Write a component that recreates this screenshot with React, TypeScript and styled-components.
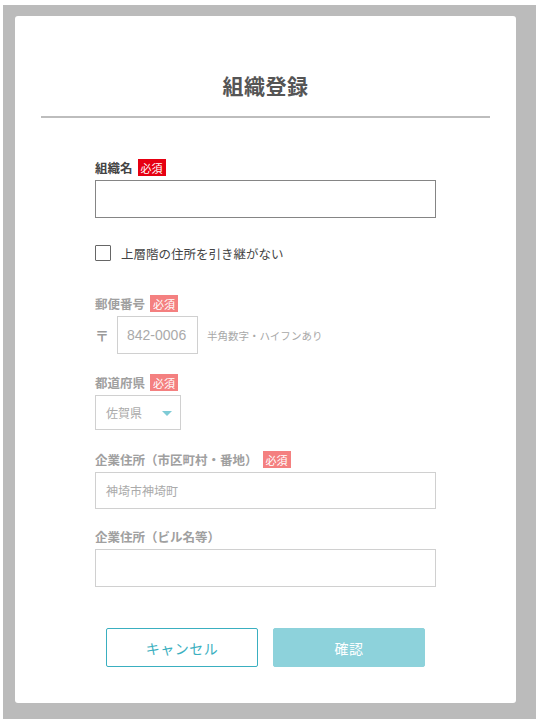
import React from "react";
import styled, { createGlobalStyle } from "styled-components";

const Global = createGlobalStyle`
  html, body { margin: 0; padding: 0; background: #ffffff; }
  body { font-family: "Noto Sans CJK JP", "Noto Sans", sans-serif; }
  * { box-sizing: border-box; }
`;

const Overlay = styled.div`
  margin: 5px 0 0 3px;
  width: 533px;
  height: 714px;
  background: #bbbbbb;
  padding: 11px 20px 16px 12px;
`;

const Card = styled.div`
  width: 501px;
  height: 687px;
  background: #ffffff;
  border-radius: 3px;
  padding: 0 26px;
  display: flex;
  flex-direction: column;
`;

const Title = styled.h1`
  margin: 54px 0 0;
  height: 30px;
  line-height: 30px;
  font-size: 21px;
  font-weight: 700;
  color: #555555;
  text-align: center;
  letter-spacing: 0.5px;
`;

const Divider = styled.hr`
  margin: 16px 0 0;
  border: none;
  height: 2px;
  background: #bdbdbd;
`;

const Form = styled.div`
  width: 341px;
  margin: 0 auto;
  display: flex;
  flex-direction: column;
`;

const Field = styled.div<{ $top: number }>`
  margin-top: ${(p) => p.$top}px;
  display: flex;
  flex-direction: column;
  gap: 4px;
`;

const LabelRow = styled.div`
  display: flex;
  align-items: center;
  gap: 5px;
  height: 17px;
`;

const Label = styled.span<{ $muted?: boolean }>`
  font-size: 12.5px;
  font-weight: 700;
  color: ${(p) => (p.$muted ? "#a0a0a0" : "#444444")};
  line-height: 17px;
`;

const Badge = styled.span<{ $muted?: boolean }>`
  display: inline-flex;
  align-items: center;
  justify-content: center;
  height: 17px;
  padding: 0 3px;
  font-size: 11px;
  color: #ffffff;
  background: ${(p) => (p.$muted ? "#f48080" : "#e60012")};
`;

const TextBox = styled.div<{ $height: number; $strong?: boolean }>`
  width: 100%;
  height: ${(p) => p.$height}px;
  border: ${(p) => (p.$strong ? "1.5px solid #858585" : "1.5px solid #d0d0d0")};
  display: flex;
  align-items: center;
  padding: 0 10px;
  font-size: 12px;
  color: #aaaaaa;
`;

const CheckRow = styled.label`
  margin-top: 27px;
  display: flex;
  align-items: center;
  gap: 10px;
  height: 16px;
`;

const CheckBox = styled.span`
  width: 16px;
  height: 16px;
  border: 1.5px solid #666666;
  border-radius: 1px;
  background: #fff;
`;

const CheckText = styled.span`
  font-size: 12.5px;
  color: #444444;
`;

const PostalRow = styled.div`
  display: flex;
  align-items: center;
  height: 38px;
`;

const PostMark = styled.span`
  width: 22px;
  font-size: 14px;
  font-weight: 700;
  color: #9a9a9a;
`;

const PostalInput = styled.div`
  width: 81px;
  height: 38px;
  border: 1.5px solid #d0d0d0;
  display: flex;
  align-items: center;
  padding-left: 9px;
  font-size: 14px;
  color: #aaaaaa;
  font-family: "Liberation Sans", "Noto Sans CJK JP", sans-serif;
`;

const Hint = styled.span`
  margin-left: 9px;
  font-size: 10.5px;
  color: #a8a8a8;
`;

const Select = styled.div`
  width: 86px;
  height: 35px;
  border: 1.5px solid #d0d0d0;
  display: flex;
  align-items: center;
  justify-content: space-between;
  padding: 0 8px 0 10px;
  font-size: 12px;
  color: #aaaaaa;
`;

const Caret = styled.span`
  width: 0;
  height: 0;
  border-left: 5px solid transparent;
  border-right: 5px solid transparent;
  border-top: 5px solid #7fcbd6;
  margin-top: 2px;
`;

const Buttons = styled.div`
  margin-top: 41px;
  display: flex;
  justify-content: center;
  gap: 15px;
`;

const Button = styled.button<{ $primary?: boolean }>`
  width: 152px;
  height: 39px;
  border-radius: 2px;
  font-family: "Noto Sans CJK JP", sans-serif;
  font-size: 14px;
  cursor: pointer;
  border: 1.5px solid ${(p) => (p.$primary ? "#8dd2db" : "#3aafc0")};
  background: ${(p) => (p.$primary ? "#8dd2db" : "#ffffff")};
  color: ${(p) => (p.$primary ? "#ffffff" : "#3aafc0")};
  letter-spacing: 0.5px;
`;

export default function App() {
  return (
    <>
      <Global />
      <Overlay>
        <Card>
          <Title>組織登録</Title>
          <Divider />
          <Form>
            <Field $top={41}>
              <LabelRow>
                <Label>組織名</Label>
                <Badge>必須</Badge>
              </LabelRow>
              <TextBox $height={38} $strong />
            </Field>

            <CheckRow>
              <CheckBox />
              <CheckText>上層階の住所を引き継がない</CheckText>
            </CheckRow>

            <Field $top={34}>
              <LabelRow>
                <Label $muted>郵便番号</Label>
                <Badge $muted>必須</Badge>
              </LabelRow>
              <PostalRow>
                <PostMark>〒</PostMark>
                <PostalInput>842-0006</PostalInput>
                <Hint>半角数字・ハイフンあり</Hint>
              </PostalRow>
            </Field>

            <Field $top={20}>
              <LabelRow>
                <Label $muted>都道府県</Label>
                <Badge $muted>必須</Badge>
              </LabelRow>
              <Select>
                <span>佐賀県</span>
                <Caret />
              </Select>
            </Field>

            <Field $top={21}>
              <LabelRow>
                <Label $muted>企業住所（市区町村・番地）</Label>
                <Badge $muted>必須</Badge>
              </LabelRow>
              <TextBox $height={37}>神埼市神埼町</TextBox>
            </Field>

            <Field $top={19}>
              <LabelRow>
                <Label $muted>企業住所（ビル名等）</Label>
              </LabelRow>
              <TextBox $height={38} />
            </Field>
          </Form>
          <Buttons>
            <Button>キャンセル</Button>
            <Button $primary>確認</Button>
          </Buttons>
        </Card>
      </Overlay>
    </>
  );
}
